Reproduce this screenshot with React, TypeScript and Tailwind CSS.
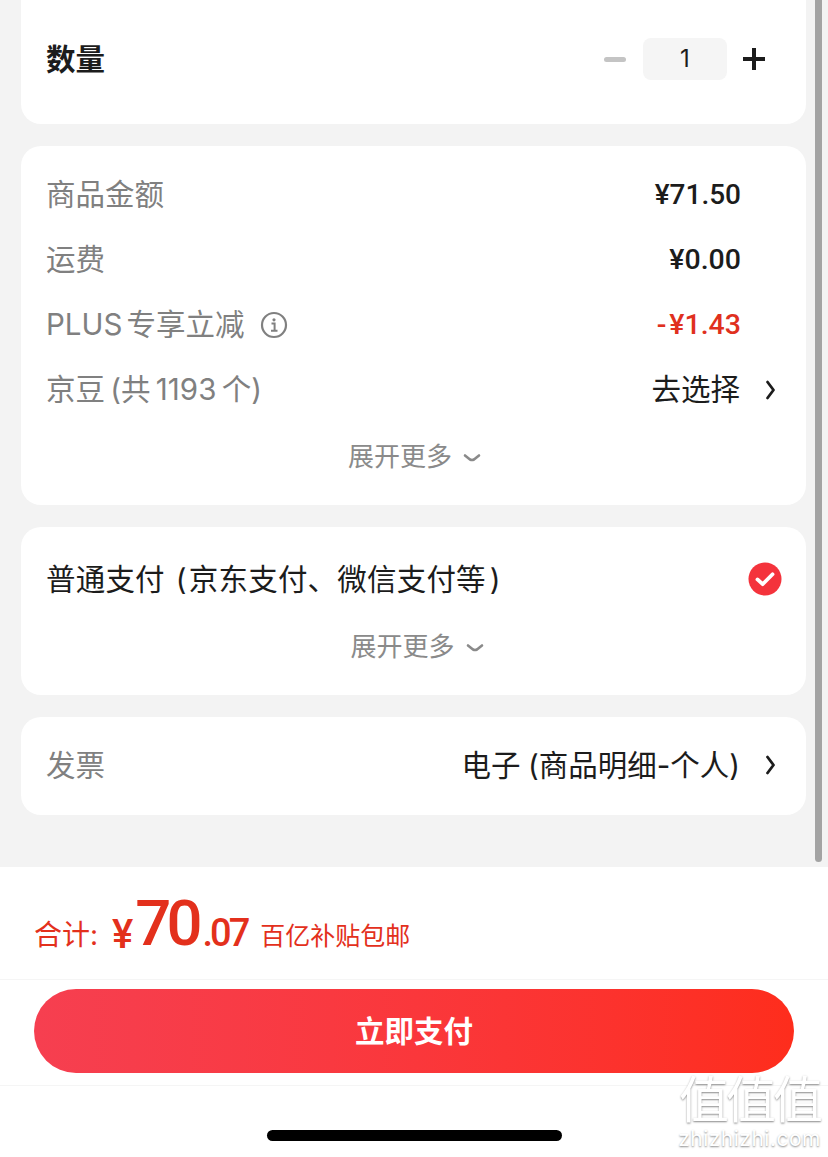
import React from 'react';

const CJK = "font-['Inter','Noto_Sans_CJK_SC',sans-serif]";
const NUM = "font-['Roboto','Noto_Sans_CJK_SC',sans-serif]";

const Chevron = () => (
  <svg width="12" height="20" viewBox="0 0 12 20" fill="none" className="ml-[24px] mr-[1px]">
    <path d="M3.5 2 L9.5 10 L3.5 18" stroke="#1c1c1c" strokeWidth="2.8" strokeLinejoin="round" strokeLinecap="round" />
  </svg>
);

const InfoIcon = () => (
  <svg width="28" height="28" viewBox="0 0 28 28" fill="none" className="ml-[16px]">
    <circle cx="14" cy="14" r="12" stroke="#808080" strokeWidth="2.2" />
    <circle cx="14" cy="8.8" r="1.6" fill="#808080" />
    <path d="M11.5 12.5 H14.6 V19.5 M11 19.8 H17.5" stroke="#808080" strokeWidth="2" />
  </svg>
);

const More = () => (
  <div className="flex items-center justify-center pl-[6px] text-[26px] leading-[34px] text-[#8a8a8a]">
    <span>展开更多</span>
    <svg width="18" height="10" viewBox="0 0 18 10" fill="none" className="ml-[11px] mt-[2px]">
      <path d="M2 2.5 L7 6.5 Q9 7.5 11 6.5 L16 2.5" stroke="#8a8a8a" strokeWidth="2.6" strokeLinecap="round" strokeLinejoin="round" />
    </svg>
  </div>
);

const Row = ({ label, children }: { label: React.ReactNode; children: React.ReactNode }) => (
  <div className="flex h-[65px] items-center justify-between">
    <div className="flex items-center text-[29.5px] text-[#808080] [word-spacing:-3px]">{label}</div>
    <div className="flex items-center">{children}</div>
  </div>
);

export default function App() {
  return (
    <div className={`relative flex h-[1157px] w-[828px] flex-col overflow-hidden bg-[#f3f3f3] ${CJK}`}>
      <div className="absolute right-[6px] top-0 h-[862px] w-[7px] rounded-b-full bg-[#a3a3a3]" />

      <div className="flex h-[867px] flex-col gap-[22px] pl-[21px] pr-[22px]">
        <section className="flex h-[124px] items-center justify-between rounded-b-[20px] bg-white pb-[6px] pl-[25px] pr-[41px]">
          <span className="text-[29.5px] font-bold text-[#1c1c1c]">数量</span>
          <div className="flex items-center">
            <span className="h-[5px] w-[22px] rounded-full bg-[#c4c4c4]" />
            <span className="ml-[17px] flex h-[42px] w-[84px] items-center justify-center rounded-[8px] bg-[#f5f5f5] text-[24px] text-[#1c1c1c]">1</span>
            <svg width="22" height="22" viewBox="0 0 22 22" className="ml-[16px]">
              <path d="M0.5 11 H21.5 M11 0.5 V21.5" stroke="#1c1c1c" strokeWidth="4" strokeLinecap="round" />
            </svg>
          </div>
        </section>

        <section className="flex h-[359px] flex-col rounded-[20px] bg-white pl-[25px] pr-[29px] pt-[16px]">
          <Row label="商品金额">
            <span className={`mr-[36px] pt-[1px] text-[28px] font-medium text-[#1c1c1c] ${NUM}`}>¥71.50</span>
          </Row>
          <Row label="运费">
            <span className={`mr-[36px] pt-[2px] text-[28.5px] font-medium text-[#1c1c1c] ${NUM}`}>¥0.00</span>
          </Row>
          <Row label={<>PLUS<span className="ml-[4px]">专享立减</span><InfoIcon /></>}>
            <span className={`mr-[36px] pt-[2px] text-[28.5px] font-medium text-[#e0301e] ${NUM}`}>
              <span className="mr-[3px]">-</span>¥1.43
            </span>
          </Row>
          <Row label="京豆 (共 1193 个)">
            <span className="text-[29.5px] text-[#1c1c1c]">去选择</span>
            <Chevron />
          </Row>
          <div className="mt-[18px]">
            <More />
          </div>
        </section>

        <section className="flex h-[168px] flex-col rounded-[20px] bg-white pl-[25px] pr-[24px] pt-[26px]">
          <div className="flex h-[52px] items-center justify-between">
            <span className="text-[29.5px] tracking-[0.2px] text-[#1c1c1c] [word-spacing:-1px]">普通支付<span className="ml-[11px]">(</span><span className="ml-[2px]">京东支付、微信支付等</span><span className="ml-[4px]">)</span></span>
            <svg width="34" height="34" viewBox="0 0 36 36">
              <circle cx="18" cy="18" r="17.5" fill="#f4333c" />
              <path d="M10 18.5 L15.5 23.5 L26 13" fill="none" stroke="#fff" strokeWidth="4" strokeLinecap="round" strokeLinejoin="round" />
            </svg>
          </div>
          <div className="mt-[25px]">
            <More />
          </div>
        </section>

        <section className="flex h-[98px] items-center justify-between rounded-[20px] bg-white pb-[2px] pl-[25px] pr-[29px]">
          <span className="text-[29.5px] text-[#808080]">发票</span>
          <div className="flex items-center">
            <span className="text-[29.5px] text-[#1c1c1c] [word-spacing:-1px]">电子 (商品明细-个人)</span>
            <Chevron />
          </div>
        </section>
      </div>

      <footer className="flex flex-1 flex-col bg-white">
        <div className="flex h-[113px] items-end border-b border-[#f5f5f5] pb-[22px] pl-[34px] text-[#e3301c]">
          <span className="text-[28px] leading-[44px]">合计:</span>
          <span className={`ml-[14px] text-[40px] font-medium leading-[44px] ${NUM}`}>¥</span>
          <span className={`ml-[2px] text-[63.5px] font-medium leading-[66px] tracking-[-5px] ${NUM}`}>70</span>
          <span className={`ml-[5px] text-[38px] font-medium leading-[48px] tracking-[-3px] ${NUM}`}>.07</span>
          <span className="ml-[13px] text-[25px] leading-[42px]">百亿补贴包邮</span>
        </div>
        <div className="flex h-[106px] flex-col border-b border-[#f5f5f5] px-[34px] pt-[9px]">
          <button className="flex h-[84px] w-[760px] items-center justify-center rounded-full bg-gradient-to-r from-[#f63f50] to-[#fe2d1c] text-[29.5px] font-semibold text-white">
            立即支付
          </button>
        </div>
        <div className="flex flex-1 justify-center pt-[44px]">
          <div className="ml-[1px] h-[11px] w-[295px] rounded-full bg-black" />
        </div>
      </footer>

      {/* site watermark over the bottom corner */}
      <div className="absolute bottom-[5px] right-[7px] flex flex-col items-center text-white [text-shadow:0_1px_2px_#8a8a8a]">
        <span className="text-[50px] leading-[52px] tracking-[-3px]">值值值</span>
        <span className="text-[21px] leading-[26px] tracking-[0.5px]">zhizhizhi.com</span>
      </div>
    </div>
  );
}
